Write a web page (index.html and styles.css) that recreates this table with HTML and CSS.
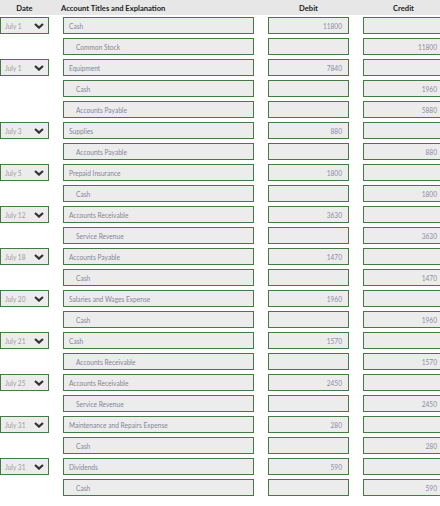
FILE: index.html
```html
<!DOCTYPE html>
<html>
<head>
<meta charset="utf-8">
<link rel="stylesheet" href="styles.css">
</head>
<body>
<div class="journal">
  <div class="head">
    <div class="h-date">Date</div>
    <div class="h-acct">Account Titles and Explanation</div>
    <div class="h-num">Debit</div>
    <div class="h-num">Credit</div>
  </div>
  <div class="rows" id="rows"></div>
</div>
<script src="app.js"></script>
</body>
</html>
```
FILE: app.js
```js
const data = [
  ["July 1","Cash","11800",""],
  ["","Common Stock","","11800"],
  ["July 1","Equipment","7840",""],
  ["","Cash","","1960"],
  ["","Accounts Payable","","5880"],
  ["July 3","Supplies","880",""],
  ["","Accounts Payable","","880"],
  ["July 5","Prepaid Insurance","1800",""],
  ["","Cash","","1800"],
  ["July 12","Accounts Receivable","3630",""],
  ["","Service Revenue","","3630"],
  ["July 18","Accounts Payable","1470",""],
  ["","Cash","","1470"],
  ["July 20","Salaries and Wages Expense","1960",""],
  ["","Cash","","1960"],
  ["July 21","Cash","1570",""],
  ["","Accounts Receivable","","1570"],
  ["July 25","Accounts Receivable","2450",""],
  ["","Service Revenue","","2450"],
  ["July 31","Maintenance and Repairs Expense","280",""],
  ["","Cash","","280"],
  ["July 31","Dividends","590",""],
  ["","Cash","","590"]
];
const chev = '<svg class="chev" width="10" height="6" viewBox="0 0 10 6"><path d="M1 1 L5 4.6 L9 1" fill="none" stroke="#333" stroke-width="2.2"/></svg>';
const rows = document.getElementById('rows');
let html = '';
for (const [d,a,dr,cr] of data) {
  html += '<div class="row">';
  html += d ? '<div class="box date"><span>'+d+'</span>'+chev+'</div>' : '<div></div>';
  html += '<div class="box acct'+(d?'':' indent')+'">'+a+'</div>';
  html += '<div class="box num">'+dr+'</div>';
  html += '<div class="box num">'+cr+'</div>';
  html += '</div>';
}
rows.innerHTML = html;
```
FILE: styles.css
```css
html, body {
  margin: 0;
  padding: 0;
  background: #fff;
  overflow: hidden;
}
body {
  font-family: Lato, "Open Sans", sans-serif;
  font-variant-numeric: lining-nums;
  width: 440px;
}
.journal {
  width: 460px;
}
.head, .row {
  display: grid;
  grid-template-columns: 49px 191px 81px 81px;
  column-gap: 14px;
}
.head {
  background: #e7e7e7;
  height: 15px;
  align-items: center;
  font-weight: 700;
  font-size: 7.6px;
  color: #222;
  width: 440px;
  overflow: hidden;
}
.h-date, .h-num { text-align: center; }
.h-acct { margin-left: -2px; }
.rows {
  display: flex;
  flex-direction: column;
  gap: 4px;
  padding-top: 2px;
}
.box {
  box-sizing: border-box;
  height: 17px;
  border: 1.6px solid #467a44;
  background: #ececec;
  font-size: 6.6px;
  color: #85859a;
  display: flex;
  align-items: center;
  padding: 0 5px;
  white-space: nowrap;
}
.date {
  justify-content: space-between;
  color: #9c9c9c;
  padding: 0 4px 0 4px;
}
.chev { display: block; }
.indent { padding-left: 12px; }
.num {
  justify-content: flex-end;
  padding-right: 6px;
  color: #8c8ca6;
}
```
